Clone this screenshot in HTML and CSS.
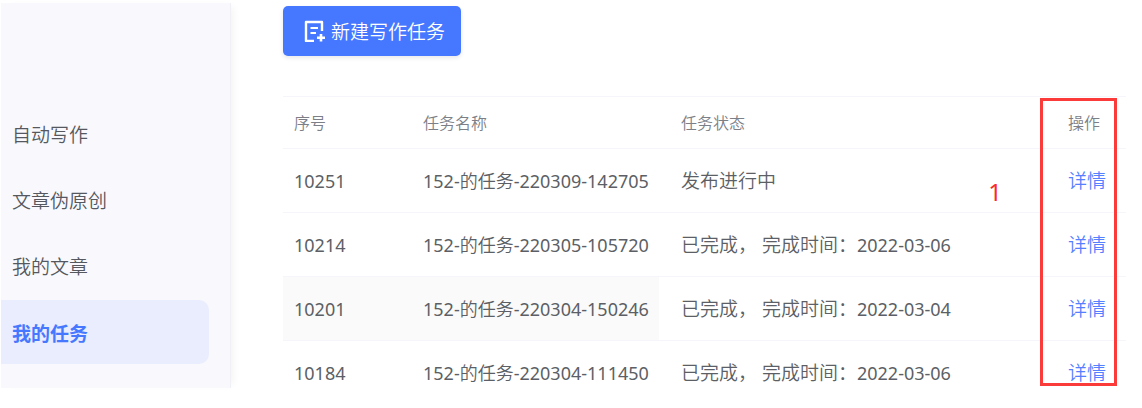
FILE: index.html
```html
<!DOCTYPE html>
<html lang="zh-CN">

<head>
    <meta charset="UTF-8">
    <meta name="viewport" content="width=device-width, initial-scale=1.0">
    <title>我的任务</title>
    <link rel="stylesheet" href="styles.css">
</head>

<body>
    <div class="layout">
        <nav class="sidebar">
            <a href="#" class="nav-item">自动写作</a>
            <a href="#" class="nav-item">文章伪原创</a>
            <a href="#" class="nav-item">我的文章</a>
            <a href="#" class="nav-item active">我的任务</a>
        </nav>

        <main class="content">
            <button type="button" class="new-task">
                <svg class="new-task-icon" width="21" height="22" viewBox="0 0 21 22" fill="none" stroke="currentColor" stroke-width="2">
                    <path d="M18 11V2H2V21H10" stroke-width="2.4" stroke-linejoin="round" />
                    <path d="M6.5 8H14M6.5 13H12" />
                    <path d="M17 14V21.5M13 17.8H21" stroke-width="2.6" />
                </svg>
                新建写作任务
            </button>

            <div class="table-wrap">
                <table class="task-table">
                    <colgroup>
                        <col class="col-id">
                        <col class="col-name">
                        <col>
                        <col class="col-action">
                    </colgroup>
                    <thead>
                        <tr>
                            <th>序号</th>
                            <th>任务名称</th>
                            <th class="status">任务状态</th>
                            <th>操作</th>
                        </tr>
                    </thead>
                    <tbody>
                        <tr>
                            <td>10251</td>
                            <td>152-的任务-220309-142705</td>
                            <td class="status">发布进行中</td>
                            <td><a href="#">详情</a></td>
                        </tr>
                        <tr>
                            <td>10214</td>
                            <td>152-的任务-220305-105720</td>
                            <td class="status">已完成， 完成时间：<time>2022-03-06</time></td>
                            <td><a href="#">详情</a></td>
                        </tr>
                        <tr>
                            <td class="hover">10201</td>
                            <td class="hover">152-的任务-220304-150246</td>
                            <td class="status">已完成， 完成时间：<time>2022-03-04</time></td>
                            <td><a href="#">详情</a></td>
                        </tr>
                        <tr>
                            <td>10184</td>
                            <td>152-的任务-220304-111450</td>
                            <td class="status">已完成， 完成时间：<time>2022-03-06</time></td>
                            <td><a href="#">详情</a></td>
                        </tr>
                    </tbody>
                </table>
                <!-- highlight over the action column -->
                <div class="mark-box"></div>
                <span class="mark-num">1</span>
            </div>
        </main>
    </div>
</body>

</html>
```

FILE: styles.css
```css
* {
    box-sizing: border-box;
    padding: 0;
    margin: 0;
}

body {
    background-color: #ffffff;
    color: #5c5f65;
    font-family: "Noto Sans", "Noto Sans CJK SC DemiLight", "Noto Sans CJK SC", sans-serif;
    font-size: 18px;
    line-height: 24px;
}

a {
    text-decoration: none;
}

.layout {
    display: flex;
    padding: 3px 16px 20px 1px;
}

/* sidebar */
.sidebar {
    flex: none;
    width: 230px;
    display: flex;
    flex-direction: column;
    gap: 2px;
    padding: 99px 21px 24px 0;
    background-color: #f8f8fd;
    border-right: 1px solid #f0f0f7;
    box-shadow: 6px 0 8px -4px #f3f3f5;
}

.nav-item {
    height: 64px;
    padding: 21px 11px 19px;
    border-radius: 0 10px 10px 0;
    color: #55585e;
    font-size: 19px;
}

.nav-item.active {
    background-color: #e9edfd;
    color: #4678ff;
    font-family: "Noto Sans CJK SC", sans-serif;
    font-weight: 700;
}

/* content */
.content {
    flex: 1;
    min-width: 0;
    padding: 3px 0 0 52px;
}

.new-task {
    display: flex;
    align-items: center;
    gap: 6px;
    height: 50px;
    padding: 0 16px 0 21px;
    border: none;
    border-radius: 5px;
    background-color: #4678ff;
    box-shadow: 0 2px 4px #e8e8ec;
    color: #ffffff;
    font-family: inherit;
    font-size: 19px;
}

.table-wrap {
    position: relative;
    margin-top: 40px;
}

.task-table {
    width: 100%;
    table-layout: fixed;
    border-collapse: separate;
    border-spacing: 0;
    border-top: 1px solid #f5f5fb;
}

.col-id {
    width: 129px;
}

.col-name {
    width: 247px;
}

.col-action {
    width: 69px;
}

th,
td {
    text-align: left;
    white-space: nowrap;
    border-bottom: 1px solid #f5f5fb;
}

th {
    height: 52px;
    padding: 0 11px;
    color: #7c8086;
    font-size: 16px;
    font-weight: 400;
}

td {
    height: 64px;
    padding: 20px 0 19px 11px;
}

tr:last-child td {
    height: 47px;
    padding-bottom: 3px;
    border-bottom: none;
}

.status {
    padding-left: 22px;
}

td.status,
td a {
    font-size: 19px;
}

td a {
    color: #5580ff;
}

time {
    font-size: 18px;
}

.hover {
    background-color: #fafafa;
}

/* marks */
.mark-box {
    position: absolute;
    top: 2px;
    right: 9px;
    bottom: 2px;
    width: 77px;
    border: 3px solid #fb3a3a;
    pointer-events: none;
}

.mark-num {
    position: absolute;
    top: 84px;
    right: 124px;
    color: #fb2a2a;
    font-size: 24px;
}
```
